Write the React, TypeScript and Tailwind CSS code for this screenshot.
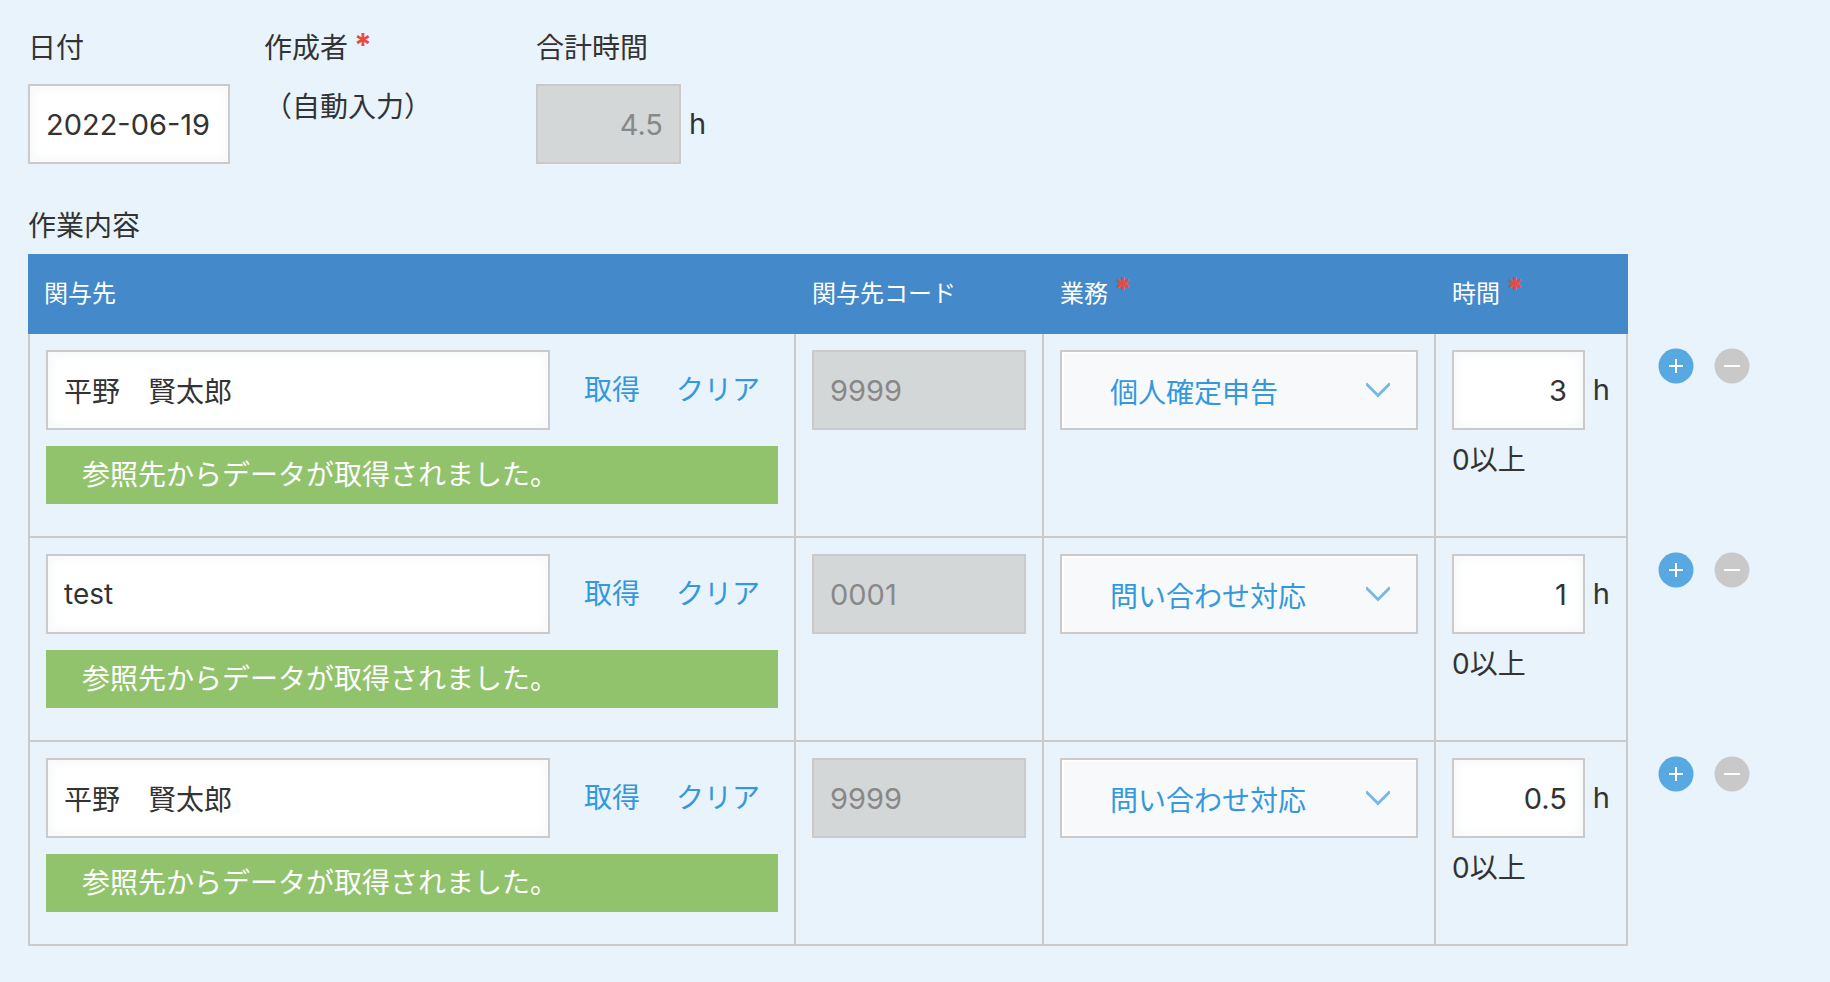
import { useState } from "react";

type Row = {
    id: number;
    client: string;
    code: string;
    task: string;
    hours: string;
};

const tasks = ['個人確定申告', '問い合わせ対応'];

const initialRows: Row[] = [
    { id: 1, client: '平野　賢太郎', code: '9999', task: '個人確定申告', hours: '3' },
    { id: 2, client: 'test', code: '0001', task: '問い合わせ対応', hours: '1' },
    { id: 3, client: '平野　賢太郎', code: '9999', task: '問い合わせ対応', hours: '0.5' },
];

const inputBase = "block h-20 min-w-0 border-2 border-[#cacaca] px-4 focus:outline-none";
const inputClass = `${inputBase} bg-white text-[#333] shadow-[inset_0_0_8px_4px_#f7f9fa]`;
const disabledClass = `${inputBase} bg-[#d4d7d7] text-[29px] text-[#888]`;

function TaskSelect({ value, onChange }: { value: string; onChange: (v: string) => void }) {
    return (
        <div className="relative">
            <select
                aria-label="業務"
                value={value}
                onChange={(e) => onChange(e.target.value)}
                className="block h-20 w-full appearance-none border-2 border-[#cacaca] bg-[#f7f9fa] pt-1.5 pl-12 text-[28px] text-[#3498db] shadow-[inset_2px_2px_0_#fff] focus:outline-none"
            >
                {tasks.map((t) => <option key={t}>{t}</option>)}
            </select>
            <svg
                className="pointer-events-none absolute top-8 right-7 h-4 w-6"
                viewBox="0 0 24 16"
                fill="none"
                stroke="#74b9e6"
                strokeWidth="2.8"
            >
                <path d="M0 1.5 L12 13.5 L24 1.5" />
            </svg>
        </div>
    );
}

export default function App() {
    const [ date, setDate ] = useState('2022-06-19');
    const [ rows, setRows ] = useState(initialRows);

    const total = rows.reduce((sum, r) => sum + (Number(r.hours) || 0), 0);

    const update = (id: number, change: Partial<Row>) => {
        setRows(rows.map((r) => (r.id === id ? { ...r, ...change } : r)));
    };

    const addRow = (index: number) => {
        const next = [...rows];
        next.splice(index + 1, 0, { id: Date.now(), client: '', code: '', task: tasks[0], hours: '' });
        setRows(next);
    };

    const removeRow = (id: number) => {
        if (rows.length > 1) setRows(rows.filter((r) => r.id !== id));
    };

    return (
        <main className="min-h-screen bg-[#e8f3fc] px-7 pt-[26px] pb-9 font-[Inter,'Noto_Sans_CJK_JP',sans-serif] text-[28px] text-[#333]">
            <section className="flex items-start gap-[34px]">
                <div className="w-[202px]">
                    <label htmlFor="date" className="flex h-[58px] leading-[44px]">日付</label>
                    <input
                        id="date"
                        type="text"
                        value={date}
                        onChange={(e) => setDate(e.target.value)}
                        className={`${inputClass} w-full text-[29px]`}
                    />
                </div>
                <div className="w-[238px]">
                    <div className="flex h-[58px] leading-[44px]">
                        作成者<span className="ml-1.5 text-[32px] leading-10 font-bold text-[#e74c3c]">*</span>
                    </div>
                    <p className="leading-[46px]">（自動入力）</p>
                </div>
                <div>
                    <label htmlFor="total" className="flex h-[58px] leading-[44px]">合計時間</label>
                    <div className="flex items-center gap-2">
                        <input id="total" type="text" disabled value={total} className={`${disabledClass} w-[145px] text-right`} />
                        <span className="text-[29px]">h</span>
                    </div>
                </div>
            </section>

            <h2 className="mt-10 mb-1.5 h-11 leading-[44px]">作業内容</h2>
            <table className="w-full table-fixed border-separate border-spacing-0">
                <colgroup>
                    <col />
                    <col className="w-[248px]" />
                    <col className="w-[392px]" />
                    <col className="w-[192px]" />
                    <col className="w-[174px]" />
                </colgroup>
                <thead>
                    <tr className="h-20 text-left text-2xl text-white">
                        <th className="bg-[#4489ca] px-4 font-normal">関与先</th>
                        <th className="bg-[#4489ca] px-4 font-normal">関与先コード</th>
                        <th className="bg-[#4489ca] px-4 font-normal">
                            <span className="flex h-8">業務<span className="ml-1.5 text-[32px] leading-6 font-bold text-[#e74c3c]">*</span></span>
                        </th>
                        <th className="bg-[#4489ca] px-4 font-normal">
                            <span className="flex h-8">時間<span className="ml-1.5 text-[32px] leading-6 font-bold text-[#e74c3c]">*</span></span>
                        </th>
                        <td></td>
                    </tr>
                </thead>
                <tbody>
                    {rows.map((row, i) => (
                        <tr key={row.id} className="align-top">
                            <td className="border-x-2 border-b-2 border-[#cacaca] px-4 pt-4 pb-8">
                                <div className="flex items-center">
                                    <input
                                        type="text"
                                        aria-label="関与先"
                                        value={row.client}
                                        onChange={(e) => update(row.id, { client: e.target.value })}
                                        className={`${inputClass} flex-1 text-[28px]`}
                                    />
                                    <button type="button" className="ml-[34px] text-[#3498db]">取得</button>
                                    <button
                                        type="button"
                                        className="mr-[18px] ml-9 text-[#3498db]"
                                        onClick={() => update(row.id, { client: '', code: '' })}
                                    >クリア</button>
                                </div>
                                <p className="mt-4 h-[58px] bg-[#91c36c] px-9 leading-[58px] text-white">参照先からデータが取得されました。</p>
                            </td>
                            <td className="border-r-2 border-b-2 border-[#cacaca] px-4 pt-4">
                                <input type="text" aria-label="関与先コード" disabled value={row.code} className={`${disabledClass} w-full`} />
                            </td>
                            <td className="border-r-2 border-b-2 border-[#cacaca] px-4 pt-4">
                                <TaskSelect value={row.task} onChange={(task) => update(row.id, { task })} />
                            </td>
                            <td className="border-r-2 border-b-2 border-[#cacaca] px-4 pt-4">
                                <div className="flex items-center gap-2">
                                    <input
                                        type="text"
                                        aria-label="時間"
                                        value={row.hours}
                                        onChange={(e) => update(row.id, { hours: e.target.value })}
                                        className={`${inputClass} w-[133px] text-right text-[29px]`}
                                    />
                                    <span className="text-[29px]">h</span>
                                </div>
                                <p className="mt-2 leading-[44px]">0以上</p>
                            </td>
                            <td className="pt-3.5 pl-[30px]">
                                <div className="flex gap-5">
                                    <button type="button" aria-label="行を追加" className="h-9 w-9" onClick={() => addRow(i)}>
                                        <svg viewBox="0 0 36 36" className="h-9 w-9" stroke="#fff" strokeWidth="2">
                                            <circle cx="18" cy="18" r="17.5" fill="#58a8e1" stroke="none" />
                                            <path d="M11 18H25M18 11V25" />
                                        </svg>
                                    </button>
                                    <button type="button" aria-label="行を削除" className="h-9 w-9" onClick={() => removeRow(row.id)}>
                                        <svg viewBox="0 0 36 36" className="h-9 w-9" stroke="#fff" strokeWidth="2">
                                            <circle cx="18" cy="18" r="17.5" fill="#c9c9c9" stroke="none" />
                                            <path d="M10 18H26" />
                                        </svg>
                                    </button>
                                </div>
                            </td>
                        </tr>
                    ))}
                </tbody>
            </table>
        </main>
    );
}
